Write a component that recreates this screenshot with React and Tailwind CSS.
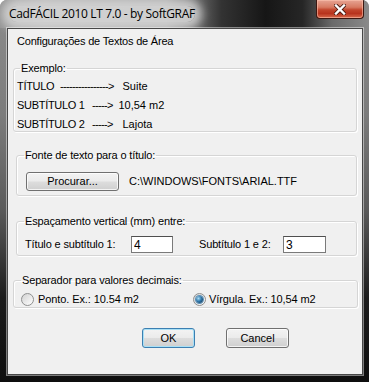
import React from "react";

function Btn({ children, className = "", def = false }) {
  return (
    <button
      type="button"
      className={
        "rounded-[3px] border text-[11px] leading-none text-black font-['Liberation_Sans',Arial,sans-serif] bg-[linear-gradient(to_bottom,#f3f3f3_0%,#ebebeb_48%,#dddddd_52%,#cfcfcf_100%)] " +
        (def
          ? "border-[#3c7fb1] shadow-[inset_0_0_0_1px_#a8e0f6] "
          : "border-[#707070] shadow-[inset_0_0_0_1px_rgba(255,255,255,0.75)] ") +
        className
      }
    >
      {children}
    </button>
  );
}

function Radio({ checked }) {
  return (
    <span className="w-[13px] h-[13px] rounded-full border border-[#8e8f8f] bg-[linear-gradient(135deg,#d2d2d2_0%,#e8e8e8_50%,#ffffff_100%)] flex items-center justify-center shrink-0">
      {checked && (
        <span className="w-[7px] h-[7px] rounded-full bg-[radial-gradient(circle_at_35%_35%,#a9dcf5_0%,#2f78ab_45%,#0c2b47_100%)] shadow-[0_0_0_1px_#5b8fb6]" />
      )}
    </span>
  );
}

function Legend({ children }) {
  return (
    <legend className="px-[1px] leading-[13px] text-[11px] tracking-[-0.15px]">
      {children}
    </legend>
  );
}

const box =
  "border border-[#d5d5d5] rounded-[3px] shadow-[inset_1px_1px_0_#ffffff,1px_1px_0_#ffffff] min-w-0";

export default function App() {
  return (
    <div className="w-[369px] h-[382px] overflow-hidden rounded-t-[7px] flex flex-col bg-[linear-gradient(to_bottom,#8c8c8c_0%,#7c7c7c_30%,#5a5a5a_55%,#1c1c1c_78%,#0e0e0e_100%)] font-['Liberation_Sans',Arial,sans-serif] text-black">
      {/* title bar */}
      <div className="h-[28px] shrink-0 flex items-start justify-between bg-[linear-gradient(to_right,#959595_0%,#b2b2b2_12%,#a6a6a6_45%,#333333_60%,#161616_72%,#262626_82%,#6a6a6a_90%,#8a8a8a_100%)]">
        <div className="ml-[9px] h-[28px] flex items-center">
          <span className="rounded-[10px] bg-[rgba(214,214,214,0.85)] shadow-[0_0_10px_7px_rgba(214,214,214,0.85)] font-['Open_Sans',sans-serif] text-[12px] leading-[16px] tracking-[-0.35px] text-[#000]">
            CadFÁCIL 2010 LT 7.0 - by SoftGRAF
          </span>
        </div>
        <div className="mr-[5px] w-[48px] h-[19px] rounded-b-[4px] border border-t-0 border-[#3d1710] bg-[linear-gradient(to_bottom,#e7a493_0%,#d77a62_40%,#c2452c_55%,#b8331d_75%,#d86a4c_100%)] shadow-[inset_0_0_0_1px_rgba(255,200,180,0.55)] flex items-center justify-center">
          <svg width="12" height="11" viewBox="0 0 12 11">
            <path d="M2 1.5 L10 9.5 M10 1.5 L2 9.5" stroke="#4a1a10" strokeWidth="4" strokeLinecap="square" />
            <path d="M2 1.5 L10 9.5 M10 1.5 L2 9.5" stroke="#ffffff" strokeWidth="2.4" strokeLinecap="square" />
          </svg>
        </div>
      </div>

      {/* client area */}
      <div className="ml-[7px] mr-[6px] mb-[7px] flex-1 border border-[#474747] bg-[#f0f0f0] shadow-[0_0_0_1px_rgba(255,255,255,0.45)] flex flex-col text-[11px]">
        <div className="mt-[6px] ml-[9px] h-[13px] leading-[13px] tracking-[-0.2px]">
          Configurações de Textos de Área
        </div>

        {/* Exemplo */}
        <fieldset className={"mt-[14px] ml-[5px] w-[344px] pl-[3px] pt-[5px] pb-0 " + box}>
          <legend className="ml-[3px] px-[1px] leading-[13px] text-[11px] tracking-[-0.15px]">Exemplo:</legend>
          <div className="flex flex-col gap-[6px]">
            <div className="flex h-[13px] leading-[13px]">
              <span className="w-[43px] tracking-[-0.3px]">TÍTULO</span>
              <span className="tracking-[-0.66px]">----------------</span>
              <span>&gt;</span>
              <span className="ml-[8px]">Suite</span>
            </div>
            <div className="flex h-[13px] leading-[13px]">
              <span className="w-[75px] tracking-[-0.3px]">SUBTÍTULO 1</span>
              <span className="tracking-[-0.66px]">-----</span>
              <span>&gt;</span>
              <span className="ml-[5px]">10,54 m2</span>
            </div>
            <div className="flex h-[13px] leading-[13px]">
              <span className="w-[75px] tracking-[-0.3px]">SUBTÍTULO 2</span>
              <span className="tracking-[-0.66px]">-----</span>
              <span>&gt;</span>
              <span className="ml-[9px]">Lajota</span>
            </div>
          </div>
        </fieldset>

        {/* Fonte */}
        <fieldset className={"mt-[17px] ml-[8px] w-[341px] pl-[7px] pt-[10px] pb-[4px] " + box}>
          <Legend>Fonte de texto para o título:</Legend>
          <div className="flex items-center">
            <Btn className="ml-[2px] w-[93px] h-[19px]">Procurar...</Btn>
            <span className="ml-[10px] leading-[13px]">C:\WINDOWS\FONTS\ARIAL.TTF</span>
          </div>
        </fieldset>

        {/* Espaçamento */}
        <fieldset className={"mt-[19px] ml-[8px] w-[341px] pl-[7px] pt-[8px] pb-[2px] " + box}>
          <Legend>Espaçamento vertical (mm) entre:</Legend>
          <div className="flex items-center">
            <span className="ml-[1px] w-[106px] leading-[13px] tracking-[-0.15px]">Título e subtítulo 1:</span>
            <input
              readOnly
              value="4"
              className="w-[42px] h-[17px] border border-[#7a7a7a] border-t-[#4f4f4f] bg-white pl-[2px] text-[12px] leading-[15px] outline-none font-['Liberation_Sans',Arial,sans-serif]"
            />
            <span className="ml-[26px] w-[84px] leading-[13px] tracking-[-0.15px]">Subtítulo 1 e 2:</span>
            <input
              readOnly
              value="3"
              className="w-[43px] h-[17px] border border-[#7a7a7a] border-t-[#4f4f4f] bg-white pl-[2px] text-[12px] leading-[15px] outline-none font-['Liberation_Sans',Arial,sans-serif]"
            />
          </div>
        </fieldset>

        {/* Separador */}
        <fieldset className={"mt-[18px] ml-[5px] w-[345px] pl-[7px] pt-[6px] pb-[1px] " + box}>
          <Legend>Separador para valores decimais:</Legend>
          <div className="flex items-center h-[13px]">
            <Radio />
            <span className="ml-[4px] w-[155px] leading-[13px] tracking-[-0.1px]">Ponto. Ex.: 10.54 m2</span>
            <Radio checked />
            <span className="ml-[3px] leading-[13px] tracking-[-0.1px]">Vírgula. Ex.: 10,54 m2</span>
          </div>
        </fieldset>

        {/* Buttons */}
        <div className="mt-[20px] flex">
          <Btn def className="ml-[134px] w-[53px] h-[20px]">OK</Btn>
          <Btn className="ml-[31px] w-[63px] h-[20px]">Cancel</Btn>
        </div>
      </div>
    </div>
  );
}
